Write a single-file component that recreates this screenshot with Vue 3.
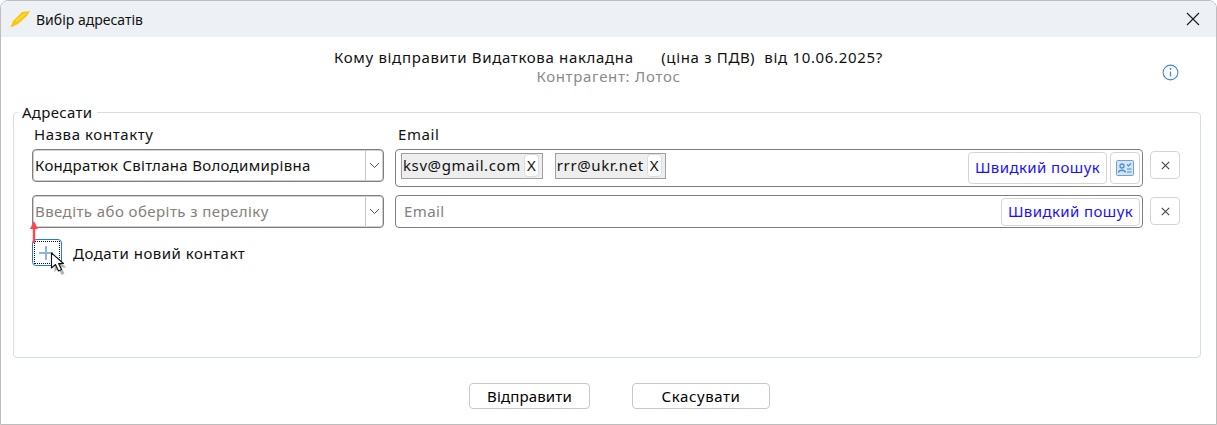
<script setup>
const rows = [
  { name: 'Кондратюк Світлана Володимирівна', placeholder: false, tags: ['ksv@gmail.com', 'rrr@ukr.net'] },
  { name: 'Введіть або оберіть з переліку', placeholder: true, tags: [] },
]
</script>

<template>
  <div class="window">
    <header class="titlebar">
      <svg class="logo" width="22" height="20" viewBox="0 0 22 20">
        <path d="M0.5 18 L3 12 L12 3 L20 2 L17 7 L8 15 L2 18 Z" fill="#f8c90f" />
        <path d="M6 12 L15 5" stroke="#fdeB9a" stroke-width="0.9" fill="none" />
      </svg>
      <span class="title">Вибір адресатів</span>
      <svg class="close" width="14" height="14" viewBox="0 0 14 14">
        <path d="M1 1 L13 13 M13 1 L1 13" stroke="#1a1a1a" stroke-width="1.1" fill="none" />
      </svg>
    </header>

    <section class="intro">
      <div></div>
      <div class="intro-text">
        <div class="question">Кому відправити Видаткова накладна&nbsp;&nbsp;&nbsp;&nbsp;&nbsp;&nbsp;(ціна з ПДВ)&nbsp;&nbsp;від 10.06.2025?</div>
        <div class="party">Контрагент: Лотос</div>
      </div>
      <svg class="info" width="17" height="17" viewBox="0 0 17 17">
        <circle cx="8.5" cy="8.5" r="7.4" fill="none" stroke="#3f8ad0" stroke-width="1.1" />
        <circle cx="8.5" cy="5" r="0.9" fill="#3f8ad0" />
        <path d="M8.5 7.4 V12.4" stroke="#3f8ad0" stroke-width="1.3" />
      </svg>
    </section>

    <fieldset class="group">
      <legend>Адресати</legend>
      <div class="head">
        <span>Назва контакту</span>
        <span class="head-email">Email</span>
      </div>

      <div v-for="(row, i) in rows" :key="i" class="row">
        <div class="combo">
          <span class="combo-value" :class="{ placeholder: row.placeholder }">{{ row.name }}</span>
          <span class="combo-arrow">
            <svg width="11" height="7" viewBox="0 0 11 7">
              <path d="M1 1 L5.5 5.5 L10 1" stroke="#555" stroke-width="1" fill="none" />
            </svg>
          </span>
        </div>

        <div class="email" :class="{ tall: row.tags.length }">
          <template v-if="row.tags.length">
            <span v-for="tag in row.tags" :key="tag" class="tag">
              <span>{{ tag }}</span><span class="tag-x">X</span>
            </span>
          </template>
          <span v-else class="email-placeholder">Email</span>
          <span class="tools">
            <button class="search">Швидкий пошук</button>
            <button v-if="row.tags.length" class="card">
              <svg width="18" height="16" viewBox="0 0 18 16">
                <rect x="0.5" y="0.5" width="17" height="15" rx="1" fill="#d5e4f4" stroke="#6ea3d8" />
                <circle cx="6" cy="6" r="2" fill="none" stroke="#4f8ccb" stroke-width="1.3" />
                <path d="M2.5 12.5 C3 9.5 9 9.5 9.5 12.5" fill="none" stroke="#4f8ccb" stroke-width="1.3" />
                <path d="M11 4.5 L12.5 6 L15 3.5 M11 9 H15.5 M11 12 H15.5" fill="none" stroke="#4f8ccb" stroke-width="1.2" />
              </svg>
            </button>
          </span>
        </div>

        <button class="remove">
          <svg width="9" height="9" viewBox="0 0 9 9">
            <path d="M0.8 0.8 L8.2 8.2 M8.2 0.8 L0.8 8.2" stroke="#444" stroke-width="1.1" fill="none" />
          </svg>
        </button>
      </div>

      <div class="add">
        <button class="add-btn">
          <span class="add-focus">
            <svg width="16" height="16" viewBox="0 0 16 16">
              <path d="M8 1 V15 M1 8 H15" stroke="#8fb4dc" stroke-width="2" fill="none" />
            </svg>
          </span>
          <svg class="arrow" width="8" height="22" viewBox="0 0 8 22">
            <path d="M4 22 V7" stroke="#ff4450" stroke-width="2.4" />
            <path d="M0 8 L4 0 L8 8 Z" fill="#ff4450" />
          </svg>
          <svg class="cursor" width="18" height="24" viewBox="0 0 18 24">
            <path d="M3 3 V18 L7 14.5 L10 21 L13 19.6 L10 13.5 L15 13.5 Z" fill="#000" opacity="0.3" transform="translate(1.5 2)" />
            <path d="M1.5 1 V16 L5.5 12.5 L8.5 19 L11.5 17.6 L8.5 11.5 L13.5 11.5 Z" fill="#fff" stroke="#111" stroke-width="1.1" stroke-linejoin="round" />
          </svg>
        </button>
        <span class="add-label">Додати новий контакт</span>
      </div>
    </fieldset>

    <footer class="footer">
      <button class="action send">Відправити</button>
      <button class="action cancel">Скасувати</button>
    </footer>
  </div>
</template>

<style scoped>
.window {
  box-sizing: border-box;
  width: 1217px;
  height: 425px;
  margin: 0;
  border: 1px solid #bdbdbd;
  border-radius: 8px 8px 0 0;
  background: #fff;
  font-family: "Noto Sans", "Open Sans", sans-serif;
  font-size: 15px;
  color: #111;
  overflow: hidden;
  display: flex;
  flex-direction: column;
}
button {
  font-family: inherit;
  font-size: inherit;
  padding: 0;
  background: #fff;
  cursor: default;
}
.titlebar {
  height: 36px;
  background: #edf1f5;
  display: flex;
  align-items: center;
  padding: 0 16px 0 9px;
  flex: none;
}
.logo { flex: none; }
.title {
  margin-left: 4px;
  flex: 1;
  font-size: 14px;
}
.intro {
  display: grid;
  grid-template-columns: 1fr auto 1fr;
  align-items: center;
  padding-top: 11px;
  height: 66px;
  box-sizing: border-box;
  flex: none;
  align-content: start;
}
.intro-text { text-align: center; line-height: 19px; letter-spacing: 0.67px; }
.party { color: #8a8a8a; }
.info { justify-self: end; margin: 11px 37px 0 0; }
.group {
  box-sizing: border-box;
  margin: 0 15px 0 12px;
  padding: 0 20px 0 18px;
  height: 255px;
  border: 1px solid #d5dde6;
  border-radius: 4px;
  flex: none;
  min-inline-size: 0;
}
legend {
  margin-left: -14px;
  padding: 0 5px 0 4px;
  font-size: 15px;
  line-height: 19px;
  letter-spacing: 0.3px;
}
.head {
  display: grid;
  grid-template-columns: 352px 1fr;
  column-gap: 11px;
  height: 27px;
  padding: 3px 0 0 2px;
  box-sizing: border-box;
  line-height: 19px;
  letter-spacing: 0.6px;
}
.head-email { margin-left: 1px; }
.row {
  display: grid;
  grid-template-columns: 352px 748px 30px;
  column-gap: 11px;
  align-items: start;
  margin-bottom: 9px;
}
.row .remove { margin-left: -4px; margin-top: 2px; }
.combo {
  box-sizing: border-box;
  height: 33px;
  border: 1px solid #7f7f7f;
  box-shadow: inset 0 0 0 1px #d0d0d0;
  border-radius: 4px;
  display: flex;
  align-items: center;
  background: #fff;
}
.combo-value {
  flex: 1;
  padding-left: 2px;
  padding-bottom: 2px;
  letter-spacing: 0.3px;
  white-space: nowrap;
}
.placeholder { color: #85807a; letter-spacing: 0.43px; }
.combo-arrow {
  width: 17px;
  height: 29px;
  border-left: 1px solid #c6c6c6;
  display: flex;
  align-items: center;
  justify-content: center;
  flex: none;
}
.email {
  box-sizing: border-box;
  height: 33px;
  border: 1px solid #7f7f7f;
  border-radius: 4px;
  display: flex;
  align-items: center;
  padding: 0 2px 0 8px;
  background: #fff;
}
.email.tall {
  height: 38px;
  padding: 0 2px 5px 5px;
  gap: 12px;
}
.row:has(.tall) { margin-bottom: 8px; }
.email-placeholder { color: #7f7f7f; flex: 1; letter-spacing: 0.4px; padding-bottom: 2px; }
.tag {
  box-sizing: border-box;
  height: 26px;
  border: 1px solid #a0a0a0;
  background: #eeeeee;
  display: inline-flex;
  align-items: center;
  padding: 0 0 2px 1px;
  letter-spacing: 0.6px;
  white-space: nowrap;
}
.tag-x {
  box-sizing: border-box;
  margin: 2px 3px 0 3px;
  width: 15px;
  height: 23px;
  line-height: 20px;
  text-align: center;
  background: #fff;
  border: 1px solid #dcdcdc;
  border-radius: 4px;
  letter-spacing: 0;
}
.tools {
  margin-left: auto;
  display: flex;
  gap: 3px;
  align-items: center;
}
.tall .tools { margin-bottom: -5px; margin-top: -1px; }
.search {
  box-sizing: border-box;
  width: 139px;
  height: 28px;
  border: 1px solid #d5d5d5;
  border-radius: 4px;
  color: #1a10ff;
  letter-spacing: 0.4px;
  padding-bottom: 2px;
}
.tall .search { height: 32px; }
.card {
  box-sizing: border-box;
  width: 30px;
  height: 32px;
  border: 1px solid #d5d5d5;
  border-radius: 4px;
  display: flex;
  align-items: center;
  justify-content: center;
}
.remove {
  box-sizing: border-box;
  width: 30px;
  height: 28px;
  border: 1px solid #d5d5d5;
  border-radius: 4px;
  display: flex;
  align-items: center;
  justify-content: center;
}
.add {
  display: flex;
  align-items: center;
  margin-top: 11px;
}
.add-btn {
  position: relative;
  box-sizing: border-box;
  width: 30px;
  height: 27px;
  border: 1px solid #1d7fd8;
  border-radius: 4px;
  padding: 1px;
  flex: none;
}
.add-focus {
  box-sizing: border-box;
  display: flex;
  align-items: center;
  justify-content: center;
  width: 100%;
  height: 100%;
  border: 1px dotted #111;
  padding-right: 2px;
}
.arrow {
  position: absolute;
  left: -3px;
  top: -19px;
}
.cursor {
  position: absolute;
  left: 17px;
  top: 12px;
}
.add-label {
  margin-left: 11px;
  letter-spacing: 0.5px;
}
.footer {
  display: flex;
  justify-content: flex-start;
  padding: 25px 0 0 468px;
  gap: 42px;
}
.action {
  box-sizing: border-box;
  height: 26px;
  border: 1px solid #c8c8c8;
  border-radius: 4px;
  letter-spacing: 0.15px;
}
.send { width: 121px; }
.cancel { width: 138px; letter-spacing: 0.6px; }
</style>

<style>
html, body { margin: 0; background: #fff; overflow: hidden; }
</style>
